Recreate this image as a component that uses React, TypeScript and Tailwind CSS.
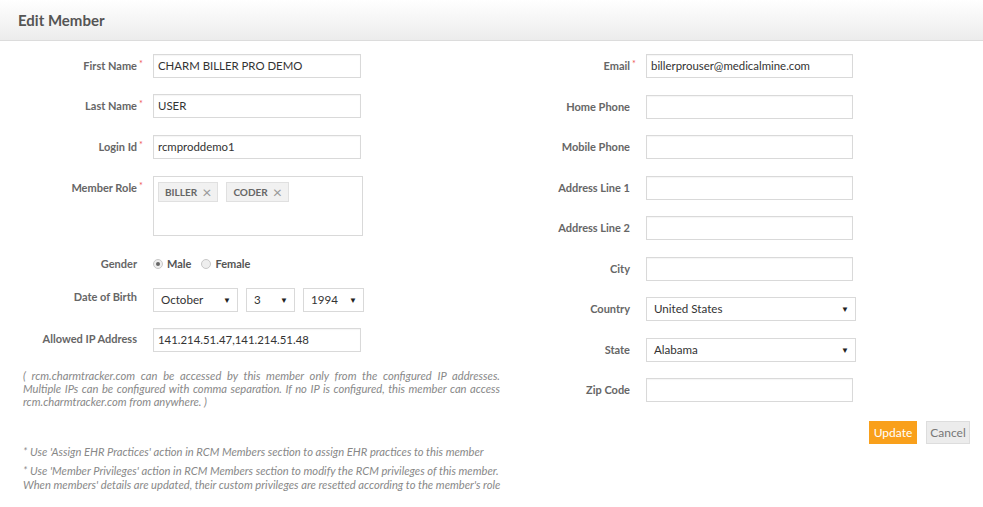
import React from "react";

const font = { fontFamily: "Lato, 'Open Sans', sans-serif" };

function Label({ text, req }: { text: string; req?: boolean }) {
  return (
    <div className="flex items-start justify-end shrink-0">
      <span className="text-[11px] font-bold text-[#666] leading-[24px] whitespace-nowrap">{text}</span>
      <span className="w-[8px] pl-[2px] text-[9px] text-[#e55] leading-[20px]">{req ? "*" : ""}</span>
    </div>
  );
}

function TextBox({ value, w = "w-[208px]" }: { value?: string; w?: string }) {
  return (
    <div className={`${w} h-[24px] border border-[#d9d9d9] bg-white flex items-center px-[4px] text-[11.4px] text-[#333] shadow-[inset_0_1px_1px_rgba(0,0,0,0.04)]`}>
      {value}
    </div>
  );
}

function Select({ value, w }: { value: string; w: string }) {
  return (
    <div className={`${w} h-[24px] border border-[#d9d9d9] bg-white flex items-center justify-between pl-[7px] pr-[6px] text-[11.6px] text-[#333]`}>
      <span>{value}</span>
      <span className="text-[8px] text-[#222]">▼</span>
    </div>
  );
}

function Tag({ text }: { text: string }) {
  return (
    <div className="h-[20px] flex items-center gap-[5px] px-[6px] bg-[#f1f1f1] border border-[#e0e0e0] text-[10px] font-bold text-[#666]">
      <span>{text}</span>
      <span className="text-[16px] font-normal text-[#999] leading-none">×</span>
    </div>
  );
}

function Radio({ checked }: { checked?: boolean }) {
  return (
    <span className="w-[10px] h-[10px] rounded-full border border-[#c8c8c8] bg-[#eee] flex items-center justify-center">
      {checked && <span className="w-[4px] h-[4px] rounded-full bg-[#666]" />}
    </span>
  );
}

export default function App() {
  return (
    <div className="w-[983px] h-[507px] bg-white overflow-hidden" style={font}>
      <div className="h-[41px] border-b border-[#dcdcdc] bg-gradient-to-b from-white to-[#ececec] flex items-center px-[18px]">
        <span className="text-[15px] font-bold text-[#555]">Edit Member</span>
      </div>

      <div className="grid grid-cols-[500px_1fr] pt-[13px]">
        {/* Left column */}
        <div className="flex flex-col">
          <div className="flex items-start gap-[8px] mb-[16px]">
            <div className="w-[145px] flex justify-end"><Label text="First Name" req /></div>
            <TextBox value="CHARM BILLER PRO DEMO" />
          </div>
          <div className="flex items-start gap-[8px] mb-[17px]">
            <div className="w-[145px] flex justify-end"><Label text="Last Name" req /></div>
            <TextBox value="USER" />
          </div>
          <div className="flex items-start gap-[8px] mb-[17px]">
            <div className="w-[145px] flex justify-end"><Label text="Login Id" req /></div>
            <TextBox value="rcmproddemo1" />
          </div>
          <div className="flex items-start gap-[8px] mb-[17px]">
            <div className="w-[145px] flex justify-end"><Label text="Member Role" req /></div>
            <div className="w-[210px] h-[60px] border border-[#d9d9d9] bg-white flex items-start gap-[8px] p-[4px] pt-[5px]">
              <Tag text="BILLER" />
              <Tag text="CODER" />
            </div>
          </div>
          <div className="flex items-center gap-[8px] mb-[14px] h-[20px] mt-[1px]">
            <div className="w-[145px] flex justify-end items-center"><Label text="Gender" /></div>
            <div className="flex items-center text-[11px] text-[#555] font-bold">
              <Radio checked />
              <span className="ml-[4px]">Male</span>
              <span className="ml-[10px]"><Radio /></span>
              <span className="ml-[4px]">Female</span>
            </div>
          </div>
          <div className="flex items-start gap-[8px] mb-[16px]">
            <div className="w-[145px] flex justify-end -mt-[3px]"><Label text="Date of Birth" /></div>
            <div className="flex gap-[8px]">
              <Select value="October" w="w-[85px]" />
              <Select value="3" w="w-[49px]" />
              <Select value="1994" w="w-[61px]" />
            </div>
          </div>
          <div className="flex items-start gap-[8px] mb-[17px]">
            <div className="w-[145px] flex justify-end -mt-[1px]"><Label text="Allowed IP Address" /></div>
            <TextBox value="141.214.51.47,141.214.51.48" />
          </div>
          <div className="pl-[23px] text-[11.2px] leading-[13px] italic text-[#888] text-justify">
            <div className="[text-align-last:justify]">( rcm.charmtracker.com can be accessed by this member only from the configured IP addresses.</div>
            <div className="[text-align-last:justify]">Multiple IPs can be configured with comma separation. If no IP is configured, this member can access</div>
            <div>rcm.charmtracker.com from anywhere. )</div>
          </div>
        </div>

        {/* Right column */}
        <div className="flex flex-col">
          {[
            { l: "Email", r: true, v: "billerprouser@medicalmine.com" },
            { l: "Home Phone" },
            { l: "Mobile Phone" },
            { l: "Address Line 1" },
            { l: "Address Line 2" },
            { l: "City" },
          ].map((f, i) => (
            <div key={i} className="flex items-start gap-[8px] mb-[16.5px]">
              <div className="w-[138px] flex justify-end"><Label text={f.l} req={f.r} /></div>
              <TextBox value={f.v} w="w-[207px]" />
            </div>
          ))}
          <div className="flex items-start gap-[8px] mb-[16.5px]">
            <div className="w-[138px] flex justify-end"><Label text="Country" /></div>
            <Select value="United States" w="w-[210px]" />
          </div>
          <div className="flex items-start gap-[8px] mb-[16.5px]">
            <div className="w-[138px] flex justify-end"><Label text="State" /></div>
            <Select value="Alabama" w="w-[210px]" />
          </div>
          <div className="flex items-start gap-[8px] mb-[19px]">
            <div className="w-[138px] flex justify-end"><Label text="Zip Code" /></div>
            <TextBox w="w-[207px]" />
          </div>
          <div className="flex justify-end gap-[9px] pr-[13px]">
            <button className="h-[23px] w-[48px] bg-[#f9a01b] text-white text-[12px]">Update</button>
            <button className="h-[23px] w-[44px] bg-[#ececec] border border-[#ddd] text-[#777] text-[12px]">Cancel</button>
          </div>
        </div>
      </div>

      <div className="pl-[23px] pt-[1px] text-[11.2px] italic text-[#888]">
        <p className="leading-[14px]">* Use 'Assign EHR Practices' action in RCM Members section to assign EHR practices to this member</p>
        <p className="leading-[14px] mt-[5px]">* Use 'Member Privileges' action in RCM Members section to modify the RCM privileges of this member.</p>
        <p className="leading-[14px]">When members' details are updated, their custom privileges are resetted according to the member's role</p>
      </div>
    </div>
  );
}
